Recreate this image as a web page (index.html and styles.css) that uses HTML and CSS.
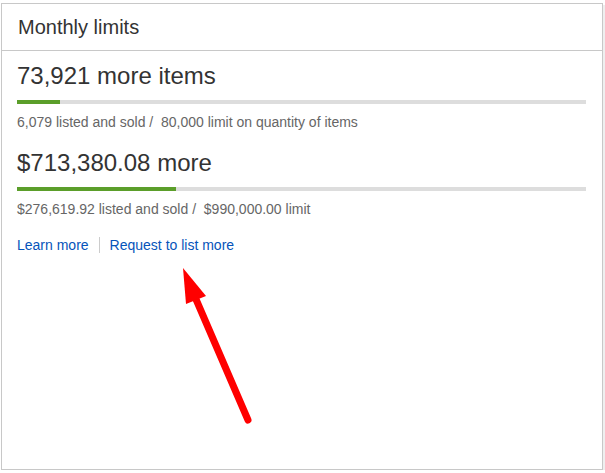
FILE: index.html
```html
<!DOCTYPE html>
<html lang="en">
<head>
    <meta charset="UTF-8">
    <title>Monthly limits</title>
    <link rel="stylesheet" href="styles.css">
</head>
<body>
    <div class="card">
        <div class="card-head">Monthly limits</div>
        <div class="card-body">
            <div class="limit">
                <div class="limit-title">73,921 more items</div>
                <div class="bar"><div class="bar-fill" style="width: 7.6%"></div></div>
                <div class="limit-note">6,079 listed and sold /&nbsp; 80,000 limit on quantity of items</div>
            </div>
            <div class="limit">
                <div class="limit-title">$713,380.08 more</div>
                <div class="bar"><div class="bar-fill" style="width: 27.9%"></div></div>
                <div class="limit-note">$276,619.92 listed and sold /&nbsp; $990,000.00 limit</div>
            </div>
            <div class="links">
                <a href="#">Learn more</a>
                <span class="sep"></span>
                <a href="#">Request to list more</a>
            </div>
        </div>
        <svg class="arrow" width="605" height="473" viewBox="0 0 605 473">
            <line x1="248" y1="420" x2="192" y2="290" stroke="#ff0000" stroke-width="7" stroke-linecap="round"/>
            <polygon points="183,268 186,304 206,296" fill="#ff0000"/>
        </svg>
    </div>
</body>
</html>
```

FILE: styles.css
```css
body { margin: 0; background: #fff; font-family: "Liberation Sans", Arial, sans-serif; }
.card {
    margin: 3px 0 0 1px;
    width: 600px;
    height: 465px;
    border: 1px solid #c8c8c8;
    background: #fff;
    box-shadow: 2px 2px 0 #efefef;
}
.card-head {
    height: 46px;
    line-height: 46px;
    padding-left: 16px;
    font-size: 20px;
    color: #333;
    border-bottom: 1px solid #c8c8c8;
}
.card-body { padding: 12px 16px 0 15px; }
.limit { margin-bottom: 20px; }
.limit-title { font-size: 24px; line-height: 26px; color: #333; }
.bar { height: 4px; background: #dddddd; margin-top: 11px; }
.bar-fill { height: 4px; background: #5b9e2a; }
.limit-note { font-size: 14px; line-height: 16px; color: #666; margin-top: 10px; }
.links { display: flex; align-items: center; font-size: 14px; line-height: 16px; margin-top: 2px; }
.links a { color: #0654ba; text-decoration: none; }
.sep { width: 1px; height: 16px; background: #ccc; margin: 0 10px; }
.arrow { position: absolute; left: 0; top: 0; pointer-events: none; }
```
